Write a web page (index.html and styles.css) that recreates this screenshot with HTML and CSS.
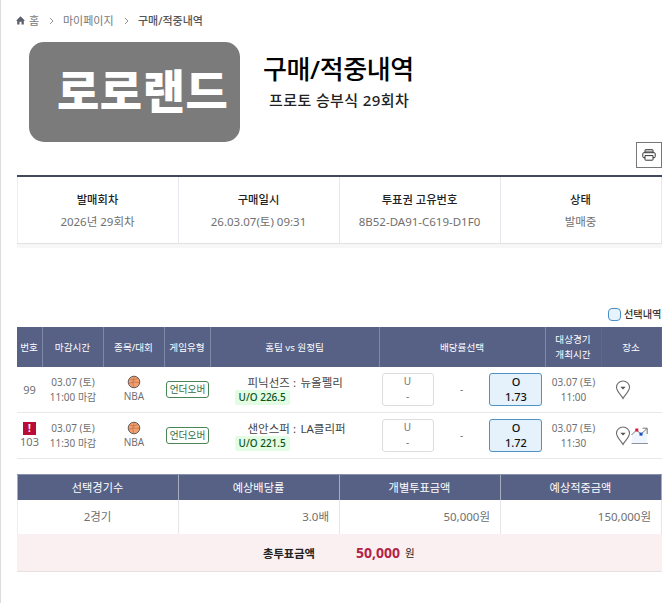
FILE: index.html
```html
<!DOCTYPE html>
<html lang="ko">
<head>
<meta charset="utf-8">
<title>구매/적중내역</title>
<link rel="stylesheet" href="styles.css">
</head>
<body>
<svg class="defs" width="0" height="0">
  <symbol id="ball" viewBox="0 0 14 14">
    <circle cx="7" cy="7" r="5.8" fill="#f0a06c" stroke="#605c60" stroke-width="1"/>
    <path d="M2.5 4Q6 6 11.3 3.5M1.5 8.5Q6 6 12.5 7.5M7.5 1.5Q4.5 6 6.5 12.4" fill="none" stroke="#b8623f" stroke-width=".6"/>
  </symbol>
  <symbol id="pin" viewBox="0 0 16 20">
    <path d="M8 18.5C6.6 15.5 1.5 11.5 1.5 7.3A6.5 6.3 0 0 1 14.5 7.3C14.5 11.5 9.4 15.5 8 18.5Z" fill="#fff" stroke="#6c6c6c" stroke-width="1.1"/>
    <path d="M5.3 6.8H10.7L8 9.4Z" fill="#555"/>
  </symbol>
</svg>
<div class="page">
  <nav class="crumbs">
    <svg class="home" viewBox="0 0 9 9"><path d="M4.5 .3L9 4.8H7.8V8.6H5.5V5.8H3.5V8.6H1.2V4.8H0Z" fill="#5d5f6b"/></svg>
    <span class="c-home">홈</span>
    <svg class="chev" viewBox="0 0 5 8"><path d="M1 1L4 4L1 7" fill="none" stroke="#888" stroke-width=".9"/></svg>
    <span class="c-my">마이페이지</span>
    <svg class="chev" viewBox="0 0 5 8"><path d="M1 1L4 4L1 7" fill="none" stroke="#888" stroke-width=".9"/></svg>
    <span class="c-cur">구매/적중내역</span>
  </nav>
  <header class="head">
    <div class="logo">로로랜드</div>
    <div class="titles">
      <h1>구매/적중내역</h1>
      <p>프로토 승부식 29회차</p>
    </div>
  </header>
  <div class="tools">
    <button class="print"><svg viewBox="0 0 14 12"><g fill="#fff" stroke="#333" stroke-width="1"><path d="M3 4V1.2Q3 .7 3.5 .7H10.5Q11 .7 11 1.2V4"/><rect x=".8" y="3.7" width="12.4" height="5" rx="1"/><path d="M3 6.6H11V10.7Q11 11.2 10.5 11.2H3.5Q3 11.2 3 10.7Z"/></g><path d="M3 2.3H11" stroke="#555" stroke-width=".8"/></svg></button>
  </div>
  <section class="info">
    <div><b>발매회차</b><span>2026년 29회차</span></div>
    <div><b>구매일시</b><span>26.03.07(토) 09:31</span></div>
    <div><b>투표권 고유번호</b><span>8B52-DA91-C619-D1F0</span></div>
    <div><b>상태</b><span>발매중</span></div>
  </section>
  <div class="legend"><i></i><span>선택내역</span></div>
  <section class="games">
    <div class="row hd">
      <div>번호</div><div>마감시간</div><div>종목/대회</div><div>게임유형</div><div>홈팀 vs 원정팀</div><div>배당률선택</div><div>대상경기<br>개최시간</div><div>장소</div>
    </div>
    <div class="row">
      <div class="no">99</div>
      <div class="time">03.07 (토)<br>11:00 마감</div>
      <div class="sport"><svg><use href="#ball"/></svg><span>NBA</span></div>
      <div class="type"><span>언더오버</span></div>
      <div class="match"><p><span class="home-team">피닉선즈</span><span class="colon">:</span><span>뉴올펠리</span></p><em>U/O 226.5</em></div>
      <div class="odds"><div class="odd"><span>U</span><span>-</span></div><span class="dash">-</span><div class="odd on"><span>O</span><span>1.73</span></div></div>
      <div class="time">03.07 (토)<br>11:00</div>
      <div class="place"><svg class="pin"><use href="#pin"/></svg></div>
    </div>
    <div class="row">
      <div class="no"><i class="alert">!</i>103</div>
      <div class="time">03.07 (토)<br>11:30 마감</div>
      <div class="sport"><svg><use href="#ball"/></svg><span>NBA</span></div>
      <div class="type"><span>언더오버</span></div>
      <div class="match"><p><span class="home-team">샌안스퍼</span><span class="colon">:</span><span>LA클리퍼</span></p><em>U/O 221.5</em></div>
      <div class="odds"><div class="odd"><span>U</span><span>-</span></div><span class="dash">-</span><div class="odd on"><span>O</span><span>1.72</span></div></div>
      <div class="time">03.07 (토)<br>11:30</div>
      <div class="place"><svg class="pin"><use href="#pin"/></svg><svg class="chart" viewBox="0 0 18 18"><path d="M1 8L5.5 3.5L10 7.5L16 1.5V16H1Z" fill="#eff6fd"/><path d="M.5 8L5.5 3L10 7.2L16 1.5M11.5 1.2H16.2V7" fill="none" stroke="#777" stroke-width="1"/><path d="M.5 16.5H17" stroke="#8b929b"/><rect x="4.3" y="1.5" width="3" height="3" fill="#dd1939"/><rect x="8.5" y="5.6" width="3" height="3" fill="#164cc0"/></svg></div>
    </div>
  </section>
  <section class="totals">
    <div class="trow th"><div>선택경기수</div><div>예상배당률</div><div>개별투표금액</div><div>예상적중금액</div></div>
    <div class="trow"><div>2경기</div><div>3.0배</div><div>50,000원</div><div>150,000원</div></div>
    <div class="sum"><b>총투표금액</b><strong>50,000</strong><span>원</span></div>
  </section>
</div>
</body>
</html>
```

FILE: styles.css
```css
* { box-sizing: border-box; margin: 0; padding: 0; }
body {
  width: 669px; height: 603px; overflow: hidden; background: #fff;
  font-family: "Noto Sans", "Noto Sans CJK KR", sans-serif; color: #707070;
}
.defs { display: block; }
.page { height: 603px; border-left: 1px solid #dcdcdc; padding: 13px 7.5px 0 15.5px; display: flex; flex-direction: column; }
.crumbs { height: 15px; display: flex; align-items: center; margin-left: -.5px; font-size: 11px; line-height: 15px; white-space: nowrap; color: #777; }
.home { width: 9px; height: 9px; margin-right: 4px; }
.chev { width: 5px; height: 8px; margin: 0 9px; flex: none; }
.c-home { width: 11px; }
.c-my { width: 51px; margin-right: 1px; }
.c-cur { color: #555; font-weight: 500; }
.head { display: flex; margin: 14px 0 0 12.5px; height: 100px; }
.logo { width: 211px; height: 100px; flex: none; border-radius: 15px; background: #7b7b7b; color: #fff; font-weight: 900; font-size: 46px; line-height: 96px; padding-left: 28px; letter-spacing: .5px; white-space: nowrap; }
.titles { padding: 10px 0 0 23px; white-space: nowrap; }
h1 { font-size: 26px; line-height: 34px; font-weight: 500; color: #000; letter-spacing: -.4px; }
.titles p { margin: 4px 0 0 6px; font-size: 15px; line-height: 20px; font-weight: 500; color: #222; letter-spacing: .4px; }
.tools { display: flex; justify-content: flex-end; height: 33px; flex: none; }
.print { width: 26px; height: 26px; border: 1px solid #777; background: #fff; display: grid; place-items: center; }
.print svg { width: 14px; height: 12px; }
.info { height: 69px; flex: none; display: grid; grid-template-columns: 162px 161px 161px 161px; border-top: 2px solid #414a5b; border-bottom: 1px solid #e2e2e5; box-shadow: 0 4px 0 #f7f7f7; text-align: center; }
.info div { border-right: 1px solid #e5e8ec; padding-top: 12px; display: flex; flex-direction: column; }
.info div:first-child { border-left: 1px solid #eceef0; }
.info b { font-size: 11.3px; line-height: 22px; font-weight: 500; color: #222; }
.info span { font-size: 11.5px; line-height: 22px; }
.legend { height: 20px; flex: none; margin-top: 60px; display: flex; justify-content: flex-end; align-items: center; font-size: 10.2px; font-weight: 500; color: #333; }
.legend i { width: 13px; height: 13px; border: 1px solid #4b8fc4; border-radius: 4px; background: #e6f3fc; margin-right: 3px; }
.legend span { position: relative; top: -1px; }
.games { margin-top: 3px; flex: none; }
.row { height: 46px; display: grid; grid-template-columns: 26px 61px 61px 46px 169px 166px 56px 60px; border-bottom: 1px solid #e8e8e8; font-size: 10px; line-height: 15px; text-align: center; }
.row > div { display: flex; flex-direction: column; align-items: center; justify-content: center; white-space: nowrap; }
.row.hd { height: 40px; background: #576186; border: 0; color: #fff; font-size: 9.6px; }
.row.hd > div { border-right: 1px solid #808aa7; display: grid; place-content: center; }
.row.hd > div:nth-child(n+7) { border-color: #5e688d; }
.row .no { font-size: 11px; line-height: 14px; }
.alert { width: 13px; height: 13px; background: #b90c37; color: #fff; font: bold 10px/13px "Noto Sans"; }
.sport svg { width: 14px; height: 14px; }
.type span { width: 43px; height: 17px; border: 1px solid #498454; border-radius: 3px; color: #2f6d3b; font-size: 9.7px; line-height: 15px; }
.row .match { align-items: flex-start; padding-left: 24px; }
.match p { display: flex; height: 15px; margin-left: 13px; font-size: 11.5px; color: #444; }
.match .home-team { width: 41px; }
.match .colon { width: 12px; text-align: center; }
.match em { height: 15px; padding: 0 4px; background: #e3fde5; border-radius: 2px; color: #0b5420; font: 500 10px/14px "Noto Sans"; }
.row .odds { flex-direction: row; justify-content: space-between; padding: 0 3px 0 2px; }
.odd { width: 52px; height: 33px; border: 1px solid #ddd; border-radius: 3px; display: grid; grid-template-rows: 16px 13px; line-height: 15px; }
.odd span:last-child { line-height: 13px; }
.odd.on { width: 53px; border-color: #4f92c5; background: #e5f2fb; color: #111; font-size: 11px; font-weight: 500; }
.row .place { flex-direction: row; justify-content: flex-start; padding-left: 13px; }
.pin { width: 16px; height: 20px; }
.chart { width: 18px; height: 18px; }
.totals { margin-top: 15px; flex: none; }
.trow { height: 34px; display: grid; grid-template-columns: 162px 161px 161px 161px; font-size: 11.5px; line-height: 34px; }
.trow div { border-right: 1px solid #e6e6e9; text-align: right; padding-right: 9.5px; }
.trow div:first-child { text-align: center; padding: 0; border-left: 1px solid #eee; }
.trow.th { height: 26px; line-height: 26px; font-size: 11.2px; background: #576186; border-top: 1px solid #8790ac; color: #fff; }
.trow.th div { text-align: center; padding: 0; border-color: #a5adbf; }
.sum { height: 38px; background: #fbf0f1; border-bottom: 1px solid #e9dfe1; display: flex; align-items: center; padding-left: 246.5px; color: #222; font-size: 11.3px; white-space: nowrap; }
.sum b { width: 93px; }
.sum strong { color: #b22346; font-size: 14px; width: 49px; }
.sum span { font-size: 10.5px; }
```
